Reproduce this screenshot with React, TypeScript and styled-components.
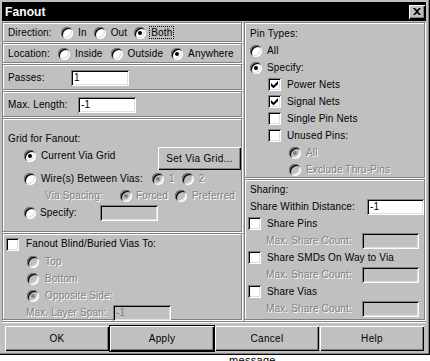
import React from 'react'
import styled, { createGlobalStyle, css } from 'styled-components'

const GlobalStyle = createGlobalStyle`
  html, body {
    margin: 0;
    padding: 0;
    background: #fff;
  }
  body {
    font-family: "Liberation Sans", Arial, sans-serif;
    font-size: 10px;
    color: #000;
  }
  * {
    box-sizing: border-box;
  }
`

const Window = styled.div`
  width: 430px;
  height: 355px;
  padding: 2px 4px 0 2px;
  background: #c0c0c0;
  box-shadow: inset -1px -1px 0 #000, inset -2px -2px 0 #808080;
  display: flex;
  flex-direction: column;
`

const TitleBar = styled.div`
  height: 19px;
  background: #000;
  display: flex;
  align-items: center;
  justify-content: space-between;
  padding: 0 1px 0 3px;
`

const TitleText = styled.span`
  color: #fff;
  font-weight: bold;
  font-size: 12px;
  letter-spacing: 0.1px;
`

const CloseButton = styled.div`
  width: 16px;
  height: 14px;
  background: #c0c0c0;
  display: flex;
  align-items: center;
  justify-content: center;
  box-shadow: inset 1px 1px 0 #fff, inset -1px -1px 0 #000, inset -2px -2px 0 #808080;
`

const Body = styled.div`
  margin-top: 1px;
  display: grid;
  grid-template-columns: 240px 181px;
  column-gap: 2px;
  height: 298px;
`

const Column = styled.div`
  display: flex;
  flex-direction: column;
  gap: 1px;
`

const Group = styled.div<{ $h: number; $pt?: number; $pl?: number }>`
  height: ${(p) => p.$h}px;
  flex: none;
  border: 1px solid #808080;
  box-shadow: inset 1px 1px 0 #fff, 1px 1px 0 #fff;
  padding: ${(p) => p.$pt ?? 0}px 0 0 ${(p) => p.$pl ?? 5}px;
  display: flex;
  flex-direction: column;
`

const Row = styled.div<{ $h?: number; $ml?: number; $gap?: number; $top?: boolean }>`
  height: ${(p) => p.$h ?? 17}px;
  flex: none;
  display: flex;
  align-items: ${(p) => (p.$top ? 'flex-start' : 'center')};
  gap: ${(p) => p.$gap ?? 0}px;
  margin-left: ${(p) => p.$ml ?? 0}px;
`

const Label = styled.span<{ $disabled?: boolean; $w?: number; $ml?: number }>`
  white-space: nowrap;
  letter-spacing: 0.15px;
  line-height: 12px;
  color: ${(p) => (p.$disabled ? '#808080' : '#000')};
  ${(p) =>
    p.$disabled &&
    css`
      text-shadow: 1px 1px 0 #fff;
    `}
  ${(p) =>
    p.$w !== undefined &&
    css`
      width: ${p.$w}px;
      flex: none;
    `}
  margin-left: ${(p) => p.$ml ?? 0}px;
`

const Focus = styled.span`
  outline: 1px dotted #000;
  padding: 0 1px;
`

const RadioCircle = styled.span<{ $checked?: boolean; $disabled?: boolean }>`
  position: relative;
  flex: none;
  width: 12px;
  height: 12px;
  border-radius: 50%;
  background: ${(p) => (p.$disabled ? '#c0c0c0' : '#fff')};
  box-shadow: inset 1px 1px 0 #808080, inset -1px -1px 0 #fff,
    inset 2px 2px 0 #000, inset -2px -2px 0 #dfdfdf;
  &::after {
    content: '';
    display: ${(p) => (p.$checked ? 'block' : 'none')};
    position: absolute;
    left: 4px;
    top: 4px;
    width: 4px;
    height: 4px;
    border-radius: 50%;
    background: ${(p) => (p.$disabled ? '#808080' : '#000')};
  }
`

const OptionWrap = styled.span<{ $ml?: number; $gap?: number }>`
  display: inline-flex;
  align-items: center;
  gap: ${(p) => p.$gap ?? 5}px;
  margin-left: ${(p) => p.$ml ?? 0}px;
  height: 17px;
  flex: none;
`

const CheckBoxBox = styled.span`
  flex: none;
  width: 13px;
  height: 13px;
  background: #fff;
  display: flex;
  align-items: center;
  justify-content: center;
  box-shadow: inset 1px 1px 0 #808080, inset -1px -1px 0 #fff,
    inset 2px 2px 0 #000, inset -2px -2px 0 #dfdfdf;
`

const TextBox = styled.div<{ $w: number; $disabled?: boolean; $push?: boolean }>`
  width: ${(p) => p.$w}px;
  height: 16px;
  flex: none;
  margin-left: ${(p) => (p.$push ? 'auto' : '0')};
  background: ${(p) => (p.$disabled ? '#c0c0c0' : '#fff')};
  color: ${(p) => (p.$disabled ? '#808080' : '#000')};
  box-shadow: inset 1px 1px 0 #808080, inset -1px -1px 0 #fff,
    inset 2px 2px 0 #000, inset -2px -2px 0 #dfdfdf;
  padding: 2px 0 0 3px;
  line-height: 12px;
  letter-spacing: 0.15px;
`

const PushButton = styled.div<{ $w: number; $h: number; $default?: boolean; $push?: boolean }>`
  width: ${(p) => p.$w}px;
  height: ${(p) => p.$h}px;
  flex: none;
  margin-left: ${(p) => (p.$push ? 'auto' : '0')};
  display: flex;
  align-items: center;
  justify-content: center;
  background: #c0c0c0;
  letter-spacing: 0.3px;
  box-shadow: inset 1px 1px 0 #fff, inset -1px -1px 0 #000,
    inset -2px -2px 0 #808080
    ${(p) => (p.$default ? ', 0 0 0 1px #000' : '')};
`

const Separator = styled.div`
  margin-top: 1px;
  height: 2px;
  border-top: 1px solid #808080;
  border-bottom: 1px solid #fff;
`

const ButtonRow = styled.div`
  margin-top: 3px;
  padding-left: 3px;
  display: flex;
  gap: 1px;
`

const Behind = styled.div`
  height: 6px;
  overflow: hidden;
  padding-left: 229px;
  background: #fff;
  font-size: 11px;
  line-height: 10px;
  letter-spacing: 0.3px;
`

const CheckMark = () => (
  <svg width="7" height="7" viewBox="0 0 7 7">
    <polygon points="0,2 2.5,4.5 7,0 7,3 2.5,7.3 0,5" fill="#000" />
  </svg>
)

const CloseGlyph = () => (
  <svg width="8" height="7" viewBox="0 0 8 7">
    <path d="M0 0h2l2 2 2-2h2L5 3.5 8 7H6L4 5 2 7H0l3-3.5z" fill="#000" />
  </svg>
)

type OptionProps = {
  label: React.ReactNode
  checked?: boolean
  disabled?: boolean
  ml?: number
  gap?: number
  w?: number
}

const Radio = ({ label, checked, disabled, ml, gap, w }: OptionProps) => (
  <OptionWrap $ml={ml} $gap={gap}>
    <RadioCircle $checked={checked} $disabled={disabled} />
    <Label $disabled={disabled} $w={w}>
      {label}
    </Label>
  </OptionWrap>
)

const CheckBox = ({ label, checked, disabled, ml, gap, w }: OptionProps) => (
  <OptionWrap $ml={ml} $gap={gap ?? 6}>
    <CheckBoxBox>{checked && <CheckMark />}</CheckBoxBox>
    <Label $disabled={disabled} $w={w}>
      {label}
    </Label>
  </OptionWrap>
)

const ShareCount = () => (
  <Row $ml={16}>
    <Label $disabled $w={96}>
      Max. Share Count:
    </Label>
    <TextBox $w={57} $disabled />
  </Row>
)

export default function App() {
  return (
    <>
      <GlobalStyle />
      <Window>
        <TitleBar>
          <TitleText>Fanout</TitleText>
          <CloseButton>
            <CloseGlyph />
          </CloseButton>
        </TitleBar>
        <Body>
          <Column>
            <Group $h={20} $pt={1}>
              <Row $gap={7}>
                <Label $w={46}>Direction:</Label>
                <Radio label="In" />
                <Radio label="Out" />
                <Radio label={<Focus>Both</Focus>} checked gap={4} />
              </Row>
            </Group>
            <Group $h={20} $pt={1}>
              <Row $gap={8}>
                <Label $w={42}>Location:</Label>
                <Radio label="Inside" />
                <Radio label="Outside" />
                <Radio label="Anywhere" checked />
              </Row>
            </Group>
            <Group $h={26} $pt={1}>
              <Row $h={24}>
                <Label $w={63}>Passes:</Label>
                <TextBox $w={58}>1</TextBox>
              </Row>
            </Group>
            <Group $h={26} $pt={1}>
              <Row $h={24}>
                <Label $w={70}>Max. Length:</Label>
                <TextBox $w={58}>-1</TextBox>
              </Row>
            </Group>
            <Group $h={114} $pt={11}>
              <Row>
                <Label>Grid for Fanout:</Label>
              </Row>
              <Row $h={23} $top>
                <Radio label="Current Via Grid" checked ml={16} />
                <PushButton $w={83} $h={23} $push>
                  Set Via Grid...
                </PushButton>
              </Row>
              <Row $gap={7}>
                <Radio label="Wire(s) Between Vias:" ml={16} w={104} />
                <Radio label="1" checked disabled />
                <Radio label="2" disabled />
              </Row>
              <Row $gap={7}>
                <Label $disabled $w={68} $ml={37}>
                  Via Spacing:
                </Label>
                <Radio label="Forced" checked disabled gap={4} />
                <Radio label="Preferred" disabled />
              </Row>
              <Row>
                <Radio label="Specify:" ml={16} w={60} gap={4} />
                <TextBox $w={58} $disabled />
              </Row>
            </Group>
            <Group $h={87} $pt={1}>
              <Row $h={18}>
                <CheckBox label="Fanout Blind/Buried Vias To:" ml={-2} gap={7} />
              </Row>
              <Row>
                <Radio label="Top" disabled ml={19} gap={6} />
              </Row>
              <Row>
                <Radio label="Bottom" disabled ml={19} gap={6} />
              </Row>
              <Row>
                <Radio label="Opposite Side:" checked disabled ml={19} gap={6} />
              </Row>
              <Row>
                <Label $disabled $w={87} $ml={18}>
                  Max. Layer Span:
                </Label>
                <TextBox $w={58} $disabled>
                  -1
                </TextBox>
              </Row>
            </Group>
          </Column>
          <Column>
            <Group $h={156} $pt={2}>
              <Row>
                <Label>Pin Types:</Label>
              </Row>
              <Row>
                <Radio label="All" />
              </Row>
              <Row>
                <Radio label="Specify:" checked />
              </Row>
              <Row>
                <CheckBox label="Power Nets" checked ml={18} />
              </Row>
              <Row>
                <CheckBox label="Signal Nets" checked ml={18} />
              </Row>
              <Row>
                <CheckBox label="Single Pin Nets" ml={18} />
              </Row>
              <Row>
                <CheckBox label="Unused Pins:" ml={18} />
              </Row>
              <Row>
                <Radio label="All" checked disabled ml={39} />
              </Row>
              <Row>
                <Radio label="Exclude Thru-Pins" disabled ml={39} />
              </Row>
            </Group>
            <Group $h={141} $pt={1}>
              <Row>
                <Label>Sharing:</Label>
              </Row>
              <Row>
                <Label>Share Within Distance:</Label>
                <TextBox $w={57} $push>
                  -1
                </TextBox>
              </Row>
              <Row>
                <CheckBox label="Share Pins" ml={-2} />
              </Row>
              <ShareCount />
              <Row>
                <CheckBox label="Share SMDs On Way to Via" ml={-2} />
              </Row>
              <ShareCount />
              <Row>
                <CheckBox label="Share Vias" ml={-2} />
              </Row>
              <ShareCount />
            </Group>
          </Column>
        </Body>
        <Separator />
        <ButtonRow>
          <PushButton $w={104} $h={25}>
            OK
          </PushButton>
          <PushButton $w={104} $h={25} $default>
            Apply
          </PushButton>
          <PushButton $w={104} $h={25}>
            Cancel
          </PushButton>
          <PushButton $w={104} $h={25}>
            Help
          </PushButton>
        </ButtonRow>
      </Window>
      <Behind>message</Behind>
    </>
  )
}
